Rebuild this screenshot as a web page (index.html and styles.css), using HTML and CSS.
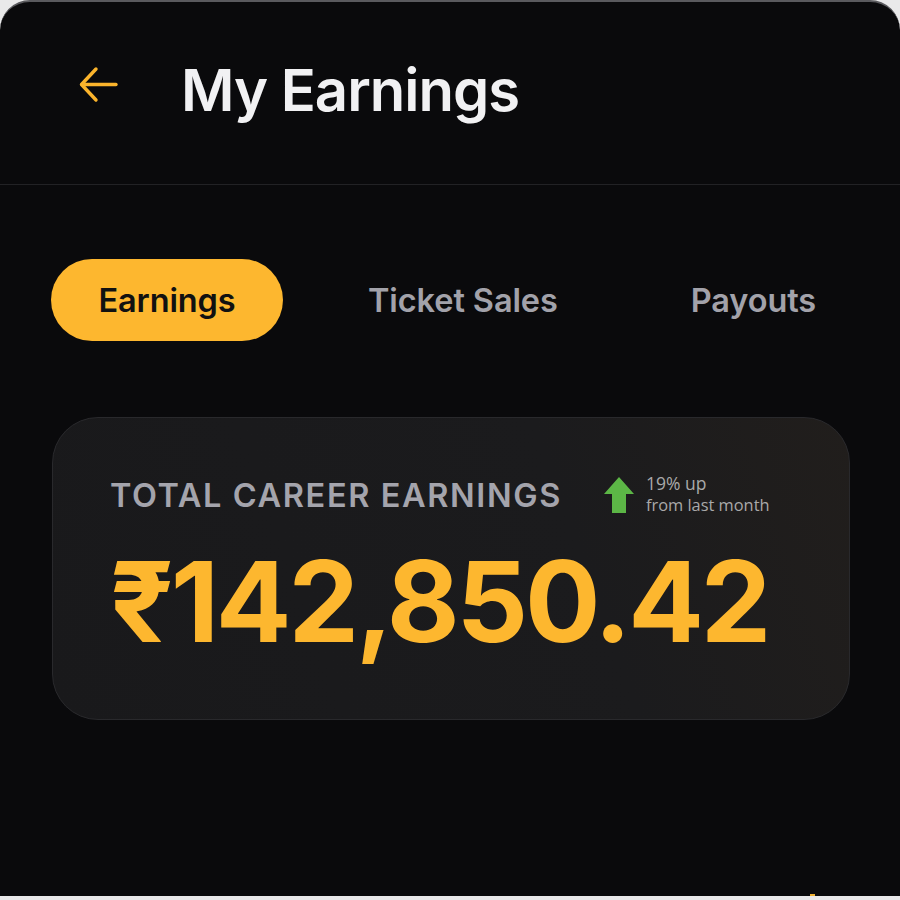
FILE: index.html
```html
<!DOCTYPE html>
<html>
  <head>
    <title>My Earnings</title>
    <link rel="stylesheet" href="styles.css">
  </head>
  <body>
    <div class="screen">
      <header class="top-bar">
        <button class="back-btn" aria-label="Back">
          <svg width="40" height="40" viewBox="0 0 40 40" fill="none" stroke="#fbb42c" stroke-width="3.4" stroke-linecap="round" stroke-linejoin="round">
            <path d="M37 19.5H3"/>
            <path d="M17 4L2.5 19.5L17 35"/>
          </svg>
        </button>
        <h1>My Earnings</h1>
      </header>

      <nav class="tabs">
        <span class="tab active">Earnings</span>
        <span class="tab">Ticket Sales</span>
        <span class="tab">Payouts</span>
      </nav>

      <!-- summary card -->
      <section class="card">
        <div class="card-head">
          <span class="label">TOTAL CAREER EARNINGS</span>
          <div class="trend">
            <svg width="32" height="36" viewBox="0 0 32 36">
              <polygon points="16,0 31,17 23,17 23,36 9,36 9,17 1,17" fill="#5cb646"/>
            </svg>
            <div class="trend-text">
              <span>19% up</span>
              <span class="small">from last month</span>
            </div>
          </div>
        </div>
        <div class="amount">₹142,850.42</div>
      </section>

      <span class="peek"></span>
    </div>
  </body>
</html>
```

FILE: styles.css
```css
body {
  margin: 0;
  padding: 0;
  background: #e9e9ea;
  font-family: "Inter", sans-serif;
}

.screen {
  position: relative;
  height: 894px;
  background: #0a0a0c;
  border-top: 2px solid #5a5a5e;
  border-radius: 30px 30px 0 0;
  overflow: hidden;
}

.top-bar {
  display: flex;
  align-items: center;
  height: 183px;
  padding: 0 0 0 78px;
  border-bottom: 1px solid #222225;
  box-sizing: border-box;
}

.back-btn {
  background: none;
  border: none;
  padding: 0;
  width: 42px;
  height: 42px;
  margin: -15px 0 0 0;
  cursor: pointer;
}

h1 {
  margin: 0 0 0 61px;
  color: #f1f1f3;
  font-size: 58px;
  font-weight: 600;
  letter-spacing: -1px;
  position: relative;
  top: -3px;
}

.tabs {
  display: flex;
  align-items: center;
  padding: 74px 0 0 51px;
}

.tab {
  font-size: 32.5px;
  font-weight: 600;
  color: #a2a2aa;
  letter-spacing: -0.1px;
}

.tab.active {
  background: #fdb72f;
  color: #111111;
  width: 232px;
  height: 82px;
  border-radius: 41px;
  display: flex;
  align-items: center;
  justify-content: center;
  margin-right: 85px;
}

.tab:nth-child(3) {
  margin-left: 133px;
}

.card {
  margin: 76px 50px 0 52px;
  height: 303px;
  box-sizing: border-box;
  border: 1px solid #29292c;
  border-radius: 46px;
  background: linear-gradient(250deg, #211e1c 0%, #1b1b1d 35%, #19191b 100%);
  padding: 57px 0 0 57px;
}

.card-head {
  display: flex;
  align-items: center;
}

.label {
  color: #a4a4ac;
  font-size: 32.5px;
  font-weight: 600;
  letter-spacing: 1.6px;
}

.trend {
  display: flex;
  align-items: center;
  margin-left: 41px;
}

.trend svg {
  margin-right: 11px;
}

.trend-text {
  display: flex;
  flex-direction: column;
  font-family: "Open Sans", sans-serif;
  color: #a9a9a9;
  font-size: 17.5px;
  line-height: 21px;
  margin-top: -2px;
}

.trend-text .small {
  font-size: 16.4px;
}

.amount {
  color: #fdb72f;
  font-size: 112px;
  font-weight: 700;
  letter-spacing: -3.2px;
  line-height: 1;
  margin-top: 30px;
}

.peek {
  position: absolute;
  left: 810px;
  bottom: -4px;
  width: 5px;
  height: 6px;
  background: #f0b132;
}
```
